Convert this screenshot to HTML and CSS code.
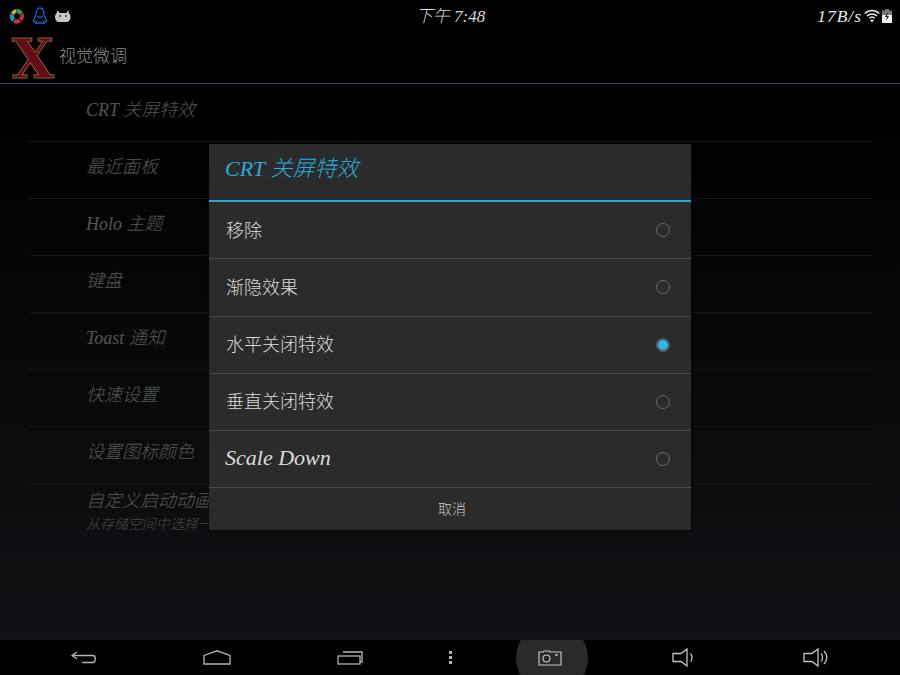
FILE: index.html
```html
<!DOCTYPE html>
<html lang="zh-CN">
<head>
  <meta charset="UTF-8" />
  <title>CRT 关屏特效</title>
  <link rel="stylesheet" href="styles.css">
</head>
<body>
<div class="screen">
  <div class="status-bar">
    <div class="status-left">
      <svg width="16" height="16" viewBox="0 0 16 16">
        <path d="M8 1a7 7 0 0 1 6 3.500L10.500 7A3 3 0 0 0 7 5.200Z" fill="#3c9a46"/>
        <path d="M14.300 5a7 7 0 0 1-1.800 8.500L9.800 10.500A3 3 0 0 0 10.900 7.500Z" fill="#b3362c"/>
        <path d="M12 14a7 7 0 0 1-8 .5L6.500 11A3 3 0 0 0 9 10.800Z" fill="#c9352b"/>
        <path d="M3.500 14A7 7 0 0 1 1.500 5.500L5.300 7.500A3 3 0 0 0 6 10.500Z" fill="#1f8fc0"/>
        <path d="M2 5a7 7 0 0 1 5.500-4L6.800 5A3 3 0 0 0 5.300 7Z" fill="#d9b21f"/>
      </svg>
      <svg width="16" height="18" viewBox="0 0 16 18" fill="none" stroke="#1267d8" stroke-width="1.300">
        <path d="M4 7.500C4 3.500 5.500 1 8 1s4 2.500 4 6.500c0 2 2.500 4.500 2.500 6.500 0 1-1.500 1-2.500.5V16H4v-1.500c-1 .5-2.500.5-2.500-.5 0-2 2.500-4.500 2.500-6.500Z"/>
        <path d="M5 9.500c2 1 4 1 6 0"/>
      </svg>
      <svg width="16" height="14" viewBox="0 0 16 14">
        <path d="M2.500 1l2 3h7l2-3 .5 3.500c1 .8 1.500 2 1.500 3.500 0 3-2 5-4 5H4c-2 0-4-2-4-5 0-1.500.5-2.700 1.500-3.500Z" fill="#c8c8c8"/>
        <circle cx="5" cy="7" r="1" fill="#333"/>
        <circle cx="11" cy="7" r="1" fill="#333"/>
      </svg>
    </div>
    <div class="status-time">下午 7:48</div>
    <div class="status-right">
      <span class="net-speed">17B/s</span>
      <svg width="16" height="14" viewBox="0 0 16 14" fill="none" stroke="#e8e8e8" stroke-width="1.500">
        <path d="M.8 4.500c4-4 10.400-4 14.400 0"/>
        <path d="M3 7c2.800-2.800 7.200-2.800 10 0"/>
        <path d="M5.200 9.300c1.600-1.500 4-1.500 5.600 0"/>
        <path d="M8 13.500l-2-2.400c1.200-.8 2.800-.8 4 0Z" fill="#e8e8e8" stroke="none"/>
      </svg>
      <svg width="10" height="14" viewBox="0 0 10 14">
        <rect x="3" y="0" width="4" height="2" fill="#777"/>
        <rect x="0" y="1.500" width="10" height="12.500" fill="#777"/>
        <rect x="0" y="6" width="10" height="8" fill="#eee"/>
        <path d="M6 3L3 8h2l-1 4 3-5H5Z" fill="#222"/>
      </svg>
    </div>
  </div>

  <div class="action-bar">
    <span class="app-logo">X</span>
    <span class="app-title">视觉微调</span>
  </div>

  <div class="content">
    <ul class="pref-list">
      <li class="pref-row">CRT 关屏特效</li>
      <li class="pref-row">最近面板</li>
      <li class="pref-row">Holo 主题</li>
      <li class="pref-row">键盘</li>
      <li class="pref-row">Toast 通知</li>
      <li class="pref-row">快速设置</li>
      <li class="pref-row">设置图标颜色</li>
      <li class="pref-row pref-row-double">
        <span class="pref-name">自定义启动动画</span>
        <span class="pref-summary">从存储空间中选择一个启动动画</span>
      </li>
    </ul>
    <div class="dim"></div>
    <div class="dialog">
      <div class="dialog-title">CRT 关屏特效</div>
      <div class="option"><span>移除</span><i class="radio"></i></div>
      <div class="option"><span>渐隐效果</span><i class="radio"></i></div>
      <div class="option"><span>水平关闭特效</span><i class="radio radio-on"></i></div>
      <div class="option"><span>垂直关闭特效</span><i class="radio"></i></div>
      <div class="option"><span class="latin">Scale Down</span><i class="radio"></i></div>
      <div class="dialog-cancel">取消</div>
    </div>
  </div>

  <div class="nav-bar">
    <svg width="26" height="14" viewBox="0 0 26 14" fill="none" stroke="#b5b5b5" stroke-width="1.300">
      <path d="M6 1L1 4.500 6 8"/>
      <path d="M1 4.500h21c3 0 3 7 0 7H11"/>
    </svg>
    <svg width="28" height="15" viewBox="0 0 28 15" fill="none" stroke="#b5b5b5" stroke-width="1.300">
      <path d="M1 5.500L14 .8l13 4.700V14H1Z"/>
    </svg>
    <svg width="26" height="14" viewBox="0 0 26 14" fill="none" stroke="#b5b5b5" stroke-width="1.300">
      <rect x="1" y="5" width="22" height="8"/>
      <path d="M6 1h19v10h-2"/>
    </svg>
    <div class="nav-dots"><i></i><i></i><i></i></div>
    <div class="nav-shot">
      <svg width="24" height="16" viewBox="0 0 24 16" fill="none" stroke="#c4c4c4" stroke-width="1.200">
        <path d="M1 15V2h4l1-1h5l1 1h11v13Z"/>
        <circle cx="8.500" cy="8.500" r="3.500"/>
        <rect x="17.500" y="4" width="2" height="2" fill="#c4c4c4" stroke="none"/>
      </svg>
    </div>
    <svg width="23" height="19" viewBox="0 0 23 19" fill="none" stroke="#c4c4c4" stroke-width="1.300">
      <path d="M1 5.500h8l6-4.500v17l-6-4.500H1Z"/>
      <path d="M18.500 5.500c2 2 2 6 0 8"/>
    </svg>
    <svg width="25" height="19" viewBox="0 0 25 19" fill="none" stroke="#c4c4c4" stroke-width="1.300">
      <path d="M1 5.500h8l6-4.500v17l-6-4.500H1Z"/>
      <path d="M18 5.500c2 2 2 6 0 8"/>
      <path d="M21 3c3.500 4 3.500 9 0 13"/>
    </svg>
  </div>
</div>
</body>
</html>
```

FILE: styles.css
```css
html, body {
  margin: 0;
  padding: 0;
  background: #000;
}

.screen {
  width: 900px;
  height: 675px;
  display: flex;
  flex-direction: column;
  background: #000;
  overflow: hidden;
  font-family: "Liberation Serif", "Noto Sans CJK SC", serif;
  font-weight: 300;
}

/* status bar */
.status-bar {
  height: 34px;
  flex-shrink: 0;
  display: grid;
  grid-template-columns: 1fr auto 1fr;
  align-items: center;
  padding: 0 8px 2px 9px;
  box-sizing: border-box;
}
.status-left {
  display: flex;
  align-items: center;
  gap: 7px;
}
.status-time {
  color: #d8d8d8;
  font-size: 17px;
  font-style: italic;
  margin-bottom: 4px;
}
.status-right {
  display: flex;
  justify-content: flex-end;
  align-items: center;
  gap: 2px;
}
.net-speed {
  color: #e8e8e8;
  font-size: 17.500px;
  font-style: italic;
  letter-spacing: 1px;
}

/* action bar */
.action-bar {
  height: 50px;
  flex-shrink: 0;
  box-sizing: border-box;
  display: flex;
  align-items: center;
  padding: 0 0 0 12px;
  border-bottom: 1px solid #2d4f63;
}
.app-logo {
  width: 42px;
  font-family: "DejaVu Serif", serif;
  font-size: 54px;
  font-weight: 700;
  line-height: 46px;
  text-align: center;
  color: #640c18;
  -webkit-text-stroke: 1px #7f6326;
}
.app-title {
  margin: 0 0 8px 5px;
  color: #8c8c8c;
  font-size: 17px;
}

/* list behind the dialog */
.content {
  position: relative;
  flex: 1;
  background: linear-gradient(#000, #282d35);
}
.pref-list {
  list-style: none;
  margin: 0;
  padding: 1px 28px 0;
}
.pref-row {
  height: 57px;
  box-sizing: border-box;
  display: flex;
  flex-direction: column;
  justify-content: center;
  padding: 0 0 10px 58px;
  border-bottom: 1px solid #333;
  color: #d0d0d0;
  font-size: 18px;
  font-style: italic;
}
.pref-row-double {
  border-bottom: none;
  justify-content: flex-start;
  padding-top: 5px;
}
.pref-name {
  font-size: 18px;
  line-height: 24px;
}
.pref-summary {
  margin-top: 3px;
  font-size: 14px;
  line-height: 18px;
  color: #b0b0b0;
}
.dim {
  position: absolute;
  inset: 0;
  background: rgba(0, 0, 0, 0.6);
}

/* dialog */
.dialog {
  position: absolute;
  left: 209px;
  top: 60px;
  width: 482px;
  background: #2b2b2b;
  box-shadow: 0 0 2px #000;
}
.dialog-title {
  height: 58px;
  box-sizing: border-box;
  display: flex;
  align-items: center;
  padding: 0 16px 12px;
  border-bottom: 2px solid #2aa9d8;
  color: #2aa9d8;
  font-size: 22px;
  font-style: italic;
}
.option {
  height: 57.250px;
  box-sizing: border-box;
  display: flex;
  align-items: center;
  justify-content: space-between;
  padding: 0 21px 0 17px;
  border-bottom: 1px solid #4a4a4a;
  color: #dcdcdc;
  font-size: 18px;
}
.option span {
  margin-bottom: 3px;
}
.option .latin {
  margin-left: -1px;
  font-size: 22px;
  font-style: italic;
}
.radio {
  width: 14px;
  height: 14px;
  box-sizing: border-box;
  border: 1px solid #6a6a6a;
  border-radius: 50%;
}
.radio-on {
  border-color: #666;
  background: radial-gradient(circle, #35b5ea 0 4.500px, #3a4a52 5.500px);
}
.dialog-cancel {
  height: 41.750px;
  box-sizing: border-box;
  display: flex;
  align-items: center;
  justify-content: center;
  padding: 0 0 3px 4px;
  color: #c8c8c8;
  font-size: 14px;
}

/* navigation bar */
.nav-bar {
  height: 35px;
  flex-shrink: 0;
  display: grid;
  grid-template-columns: repeat(3, 132.700px) 68px repeat(3, 132.700px);
  grid-template-rows: 35px;
  justify-items: center;
  align-items: center;
  padding-left: 18px;
  background: #000;
  overflow: hidden;
}
.nav-dots {
  display: flex;
  flex-direction: column;
  gap: 2px;
}
.nav-dots i {
  width: 3px;
  height: 3px;
  background: #b5b5b5;
}
.nav-shot {
  width: 72px;
  height: 72px;
  box-sizing: border-box;
  margin-left: 3px;
  padding-right: 4px;
  border-radius: 50%;
  background: #2a2a2a;
  display: flex;
  align-items: center;
  justify-content: center;
}
```
